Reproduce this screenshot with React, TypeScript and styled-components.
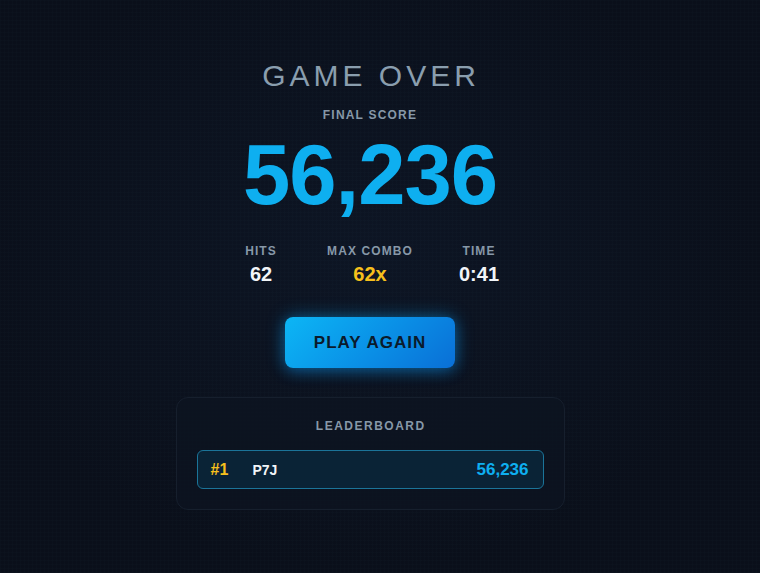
import React from 'react';
import styled, { createGlobalStyle } from 'styled-components';

const GlobalStyle = createGlobalStyle`
  html, body {
    margin: 0;
    padding: 0;
    background: #0a0f1a;
  }
  body {
    font-family: "Liberation Sans", Arial, sans-serif;
  }
`;

interface Stat {
  label: string;
  value: string;
  accent?: boolean;
}

const stats: Stat[] = [
  { label: 'HITS', value: '62' },
  { label: 'MAX COMBO', value: '62x', accent: true },
  { label: 'TIME', value: '0:41' },
];

const entries = [{ rank: 1, name: 'P7J', score: '56,236' }];

export default function App() {
  return (
    <>
      <GlobalStyle />
      <Screen>
        <Title>GAME OVER</Title>
        <Caption>FINAL SCORE</Caption>
        <Score>56,236</Score>
        <Stats>
          {stats.map((s) => (
            <StatItem key={s.label}>
              <StatLabel>{s.label}</StatLabel>
              <StatValue $accent={s.accent}>{s.value}</StatValue>
            </StatItem>
          ))}
        </Stats>
        <PlayButton>PLAY AGAIN</PlayButton>
        <Board>
          <BoardTitle>LEADERBOARD</BoardTitle>
          {entries.map((e) => (
            <BoardRow key={e.rank}>
              <Rank>#{e.rank}</Rank>
              <Player>{e.name}</Player>
              <RowScore>{e.score}</RowScore>
            </BoardRow>
          ))}
        </Board>
      </Screen>
    </>
  );
}

const Screen = styled.div`
  box-sizing: border-box;
  width: 760px;
  height: 573px;
  padding: 58px 20px 0 0;
  display: flex;
  flex-direction: column;
  align-items: center;
  background-color: #0a0f1a;
  background-image:
    linear-gradient(rgba(60, 110, 160, 0.025) 1px, transparent 1px),
    linear-gradient(90deg, rgba(60, 110, 160, 0.025) 1px, transparent 1px),
    radial-gradient(ellipse at 48% 45%, #0d1524 0%, #0a0f1a 70%);
  background-size: 4px 4px, 4px 4px, 100% 100%;
  overflow: hidden;
`;

const Title = styled.h1`
  margin: 0;
  font-size: 30px;
  line-height: 36px;
  font-weight: 400;
  letter-spacing: 4px;
  margin-right: -2px;
  color: #8a9eae;
`;

const Caption = styled.div`
  margin-top: 13px;
  font-size: 12px;
  line-height: 16px;
  font-weight: 700;
  letter-spacing: 1.2px;
  color: #8798a8;
`;

const Score = styled.div`
  margin-top: 10px;
  font-size: 85px;
  line-height: 84px;
  font-weight: 700;
  letter-spacing: -1px;
  color: #0eaff0;
`;

const Stats = styled.div`
  margin-top: 26px;
  display: grid;
  grid-template-columns: repeat(3, 85px);
  column-gap: 24px;
`;

const StatItem = styled.div`
  display: flex;
  flex-direction: column;
  align-items: center;
  gap: 3px;
`;

const StatLabel = styled.div`
  font-size: 12px;
  line-height: 16px;
  font-weight: 700;
  letter-spacing: 1.1px;
  color: #8798a8;
  white-space: nowrap;
`;

const StatValue = styled.div<{ $accent?: boolean }>`
  font-size: 20px;
  line-height: 24px;
  font-weight: 700;
  color: ${(p) => (p.$accent ? '#f7c01c' : '#f2f5f8')};
`;

const PlayButton = styled.button`
  margin-top: 31px;
  width: 170px;
  height: 51px;
  border: none;
  border-radius: 8px;
  background: linear-gradient(135deg, #0cb6f5 0%, #0a8fe6 55%, #0a6fd6 100%);
  box-shadow: 0 0 18px rgba(14, 160, 235, 0.45), 0 4px 14px rgba(10, 120, 220, 0.3);
  font-family: "Liberation Sans", Arial, sans-serif;
  font-size: 17px;
  font-weight: 700;
  letter-spacing: 1px;
  color: #0b1a2b;
  cursor: pointer;
`;

const Board = styled.div`
  box-sizing: border-box;
  margin-top: 29px;
  width: 389px;
  padding: 20px 20px 20px;
  border: 1px solid #161f2d;
  border-radius: 12px;
  background: rgba(13, 20, 33, 0.7);
  display: flex;
  flex-direction: column;
  align-items: center;
  gap: 16px;
`;

const BoardTitle = styled.div`
  font-size: 12px;
  line-height: 16px;
  font-weight: 700;
  letter-spacing: 1.5px;
  margin-right: -1.5px;
  color: #8798a8;
`;

const BoardRow = styled.div`
  box-sizing: border-box;
  width: 100%;
  height: 39px;
  padding: 0 14px 0 13px;
  display: flex;
  align-items: center;
  border: 1px solid #1b7499;
  border-radius: 6px;
  background: #0a2336;
`;

const Rank = styled.span`
  width: 42px;
  font-size: 16px;
  font-weight: 700;
  color: #f7c01c;
`;

const Player = styled.span`
  flex: 1;
  font-size: 14px;
  font-weight: 700;
  color: #f2f5f8;
`;

const RowScore = styled.span`
  font-size: 17px;
  font-weight: 700;
  color: #0eaff0;
`;
